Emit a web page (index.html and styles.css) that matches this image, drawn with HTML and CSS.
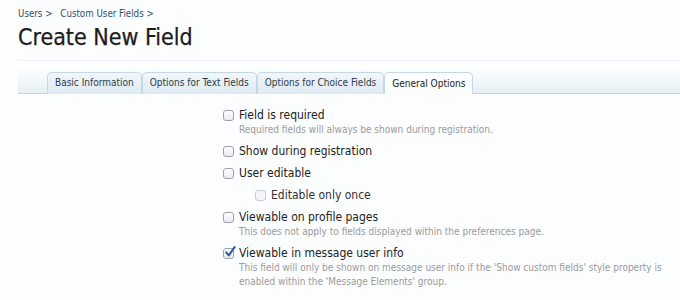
FILE: index.html
```html
<!DOCTYPE html>
<html lang="en">
<head>
    <meta charset="UTF-8">
    <title>Create New Field</title>
    <link rel="stylesheet" href="styles.css">
</head>
<body>
    <div class="page">
        <div class="crumbs">
            <a href="#">Users</a> <span class="sep">&gt;</span>
            <a href="#">Custom User Fields</a> <span class="sep">&gt;</span>
        </div>
        <h1 class="title">Create New Field</h1>

        <div class="tabbar">
            <ul class="tabs">
                <li class="tab">Basic Information</li>
                <li class="tab">Options for Text Fields</li>
                <li class="tab">Options for Choice Fields</li>
                <li class="tab active">General Options</li>
            </ul>
        </div>

        <ul class="options">
            <li>
                <label class="check"><span class="box"></span>Field is required</label>
                <p class="hint">Required fields will always be shown during registration.</p>
            </li>
            <li>
                <label class="check"><span class="box"></span>Show during registration</label>
            </li>
            <li>
                <label class="check"><span class="box"></span>User editable</label>
            </li>
            <li class="sub">
                <label class="check disabled"><span class="box"></span>Editable only once</label>
            </li>
            <li>
                <label class="check"><span class="box"></span>Viewable on profile pages</label>
                <p class="hint">This does not apply to fields displayed within the preferences page.</p>
            </li>
            <li>
                <label class="check"><span class="box checked"><svg viewBox="0 0 12 12" width="12" height="12"><path d="M2.2 6.4 L4.8 9.4 L10.6 1.2" fill="none" stroke="#2a5f9e" stroke-width="2.1" stroke-linecap="round" stroke-linejoin="round"/></svg></span>Viewable in message user info</label>
                <p class="hint">This field will only be shown on message user info if the 'Show custom fields' style property is<br>enabled within the 'Message Elements' group.</p>
            </li>
        </ul>
    </div>
</body>
</html>
```

FILE: styles.css
```css
body {
    margin: 0;
    background: #fcfdfe;
    font-family: 'DejaVu Sans Condensed', 'DejaVu Sans', Tahoma, sans-serif;
    color: #222;
}

.page {
    padding: 7px 0 0 18px;
}

.crumbs {
    font-size: 9.7px;
    line-height: 14px;
    color: #2e4f6c;
}

.crumbs a {
    color: #2e4f6c;
    text-decoration: none;
}

.crumbs .sep {
    margin-right: 5px;
}

.title {
    margin: 2px 0 0;
    font-size: 23px;
    font-weight: normal;
    line-height: 28px;
    color: #1c1c1c;
    padding-bottom: 9px;
    border-bottom: 1px solid #eef3f7;
    -webkit-text-stroke: 0.25px #1c1c1c;
}

.tabbar {
    height: 33px;
    padding-top: 2px;
    box-sizing: border-box;
    display: flex;
    align-items: flex-end;
    background: linear-gradient(to bottom, #fdfefe 20%, #e6eff6);
    border-bottom: 1px solid #c3d7e5;
}

.tabs {
    list-style: none;
    margin: 0 0 -1px 29px;
    padding: 0;
    display: flex;
}

.tab {
    font-size: 10px;
    line-height: 20px;
    padding: 0 7px;
    color: #2b3c4a;
    border: 1px solid #c3d7e5;
    border-bottom: none;
    border-radius: 5px 5px 0 0;
    background: linear-gradient(to bottom, #f2f7fb, #dde9f2);
}

.tab.active {
    background: #fcfdfe;
    line-height: 21px;
    color: #222;
}

.options {
    list-style: none;
    margin: 13px 0 0 205px;
    padding: 0;
}

.options li {
    margin-bottom: 6px;
}

.options li.sub {
    padding-left: 32px;
}

.check {
    display: flex;
    align-items: center;
    font-size: 12px;
    line-height: 16px;
    color: #222;
}

.check.disabled {
    color: #333;
}

.box {
    width: 9px;
    height: 9px;
    margin-right: 5px;
    border: 1px solid #9ca2a8;
    border-radius: 3px;
    background: linear-gradient(to bottom, #ffffff, #e9ecef);
    position: relative;
    flex: none;
}

.check.disabled .box {
    border-color: #c8ccd0;
    background: #f4f5f6;
}

.box svg {
    position: absolute;
    left: 0;
    top: -3px;
}

.hint {
    margin: 0;
    padding-left: 16px;
    font-size: 10px;
    line-height: 14px;
    color: #9b9b9b;
}
```
